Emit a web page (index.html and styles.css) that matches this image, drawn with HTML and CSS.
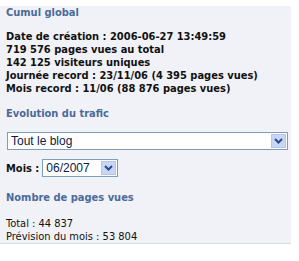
FILE: index.html
```html
<!DOCTYPE html>
<html lang="fr">
<head>
    <meta charset="UTF-8">
    <title>Statistiques</title>
    <link rel="stylesheet" href="styles.css">
</head>
<body>
    <div class="panel">
        <h3 class="title">Cumul global</h3>
        <div class="stats bold">
            <div>Date de création : 2006-06-27 13:49:59</div>
            <div>719 576 pages vues au total</div>
            <div>142 125 visiteurs uniques</div>
            <div>Journée record : 23/11/06 (4 395 pages vues)</div>
            <div>Mois record : 11/06 (88 876 pages vues)</div>
        </div>

        <h3 class="title">Evolution du trafic</h3>
        <div class="select wide">
            <span class="value">Tout le blog</span>
            <span class="arrow"><svg width="9" height="6" viewBox="0 0 9 6"><path d="M1 1l3.5 3.5L8 1" fill="none" stroke="#2b4a8a" stroke-width="2"/></svg></span>
        </div>
        <div class="month">
            <span class="bold">Mois :</span>
            <div class="select small">
                <span class="value">06/2007</span>
                <span class="arrow"><svg width="9" height="6" viewBox="0 0 9 6"><path d="M1 1l3.5 3.5L8 1" fill="none" stroke="#2b4a8a" stroke-width="2"/></svg></span>
            </div>
        </div>

        <h3 class="title">Nombre de pages vues</h3>
        <div class="stats last">
            <div>Total : 44 837</div>
            <div>Prévision du mois : 53 804</div>
        </div>
    </div>
</body>
</html>
```

FILE: styles.css
```css
body {
    margin: 0;
    background: #fff;
    font-family: "DejaVu Sans Condensed", "DejaVu Sans", sans-serif;
    font-size: 11px;
    color: #111;
}

.panel {
    margin-top: 6px;
    width: 291px;
    padding: 0 0 0 6px;
    box-sizing: border-box;
    background: #f1f2f7;
    border-bottom: 1px solid #dcdde2;
}

.title {
    margin: 0;
    font-size: 11px;
    font-weight: bold;
    color: #4b6a9b;
    line-height: 13px;
}

.bold {
    font-weight: bold;
}

.stats {
    margin: 11px 0 12px;
    line-height: 13px;
}

.stats.last {
    margin: 13px 0 0;
}

.select {
    display: flex;
    align-items: center;
    height: 18px;
    box-sizing: border-box;
    border: 1px solid #7f9db9;
    background: #fff;
    font-family: "Liberation Sans", Arial, sans-serif;
    font-size: 12px;
    color: #0a1a4a;
}

.select .value {
    flex: 1;
    padding-left: 3px;
}

.select .arrow {
    width: 15px;
    height: 14px;
    margin-right: 1px;
    display: flex;
    align-items: center;
    justify-content: center;
    background: #c7d6f4;
    border: 1px solid #b4c6ee;
    box-sizing: border-box;
}

.wide {
    margin: 12px 0 0 1px;
    width: 281px;
}

.month {
    display: flex;
    align-items: center;
    gap: 3px;
    margin: 9px 0 14px;
}

.small {
    width: 76px;
}
```
